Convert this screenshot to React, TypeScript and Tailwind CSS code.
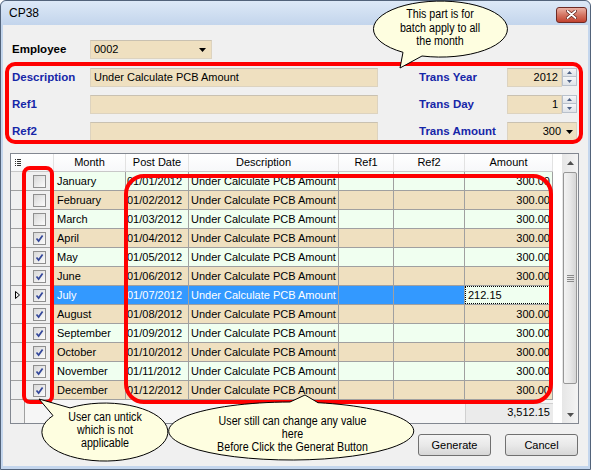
import React from 'react';

const MONTHS = [
  'January',
  'February',
  'March',
  'April',
  'May',
  'June',
  'July',
  'August',
  'September',
  'October',
  'November',
  'December',
];

const rows = MONTHS.map((month, i) => ({
  month,
  postDate: `01/${String(i + 1).padStart(2, '0')}/2012`,
  checked: i >= 3,
  amount: i === 6 ? '212.15' : '300.00',
}));

const SELECTED = 6;

const DropArrow = () => (
  <svg width="7" height="4" viewBox="0 0 7 4">
    <path d="M0 0 H7 L3.5 4 Z" fill="#000" />
  </svg>
);

const Spinner = () => (
  <div className="flex w-[15px] flex-col">
    <div className="flex h-[9px] items-center justify-center border border-[#b9c1cc] bg-gradient-to-b from-[#f6f7f9] to-[#dfe3e8]">
      <svg width="5" height="3" viewBox="0 0 5 3">
        <path d="M0 3 H5 L2.5 0 Z" fill="#4d6185" />
      </svg>
    </div>
    <div className="flex h-[9px] items-center justify-center border border-t-0 border-[#b9c1cc] bg-gradient-to-b from-[#f6f7f9] to-[#dfe3e8]">
      <svg width="5" height="3" viewBox="0 0 5 3">
        <path d="M0 0 H5 L2.5 3 Z" fill="#4d6185" />
      </svg>
    </div>
  </div>
);

const Checkbox = ({ checked }: { checked: boolean }) => (
  <div className="flex h-[13px] w-[13px] items-center justify-center border border-[#8f8f8f] bg-gradient-to-br from-[#d8d8d8] to-[#fbfbfb]">
    {checked && (
      <svg width="9" height="9" viewBox="0 0 9 9">
        <path d="M1.5 4.5 L3.6 7 L7.6 1.4" fill="none" stroke="#33479a" strokeWidth="1.7" />
      </svg>
    )}
  </div>
);

const Label = ({ children, blue }: { children: React.ReactNode; blue?: boolean }) => (
  <div className={`text-[11.5px] font-bold leading-[19px] ${blue ? 'text-[#1626a8]' : 'text-black'}`}>{children}</div>
);

const inputCls = 'h-[19px] border border-[#ddd3bf] border-t-[#c9c1b1] bg-[#efe0c0] px-[3px] leading-[17px]';
const line = 'border-r border-b border-[#a0a0a0]';

const GridRow = ({ row, index }: { row: (typeof rows)[number]; index: number }) => {
  const sel = index === SELECTED;
  const base = index % 2 === 0 ? 'bg-[#f0fff0]' : 'bg-[#efe0c0]';
  const cell = sel ? 'bg-[#3399ff] text-white' : `${base} text-black`;
  return (
    <div className="flex h-[19px] leading-[18px]">
      <div className={`flex w-[14px] items-center justify-center bg-[#f0f0f0] ${line}`}>
        {sel && (
          <svg width="5" height="8" viewBox="0 0 5 8">
            <path d="M0.5 0.5 L4.5 4 L0.5 7.5 Z" fill="none" stroke="#000" strokeWidth="1" />
          </svg>
        )}
      </div>
      <div className={`flex w-[29px] items-center justify-center bg-[#f0f0f0] ${line}`}>
        <Checkbox checked={row.checked} />
      </div>
      <div className={`w-[72px] pl-[3px] ${line} ${cell}`}>{row.month}</div>
      <div className={`w-[63px] pl-[1px] ${line} ${cell}`}>{row.postDate}</div>
      <div className={`w-[150px] pl-[2px] whitespace-nowrap overflow-hidden ${line} ${cell}`}>Under Calculate PCB Amount</div>
      <div className={`w-[55px] ${line} ${cell}`} />
      <div className={`w-[71px] ${line} ${cell}`} />
      {sel ? (
        <div className="w-[88px] border-b border-r border-[#a0a0a0] bg-[#f0fff0]">
          <div className="h-[18px] border border-dotted border-black pl-[2px] leading-[16px]">{row.amount}</div>
        </div>
      ) : (
        <div className={`w-[88px] pr-[2px] text-right ${line} ${base}`}>{row.amount}</div>
      )}
    </div>
  );
};

const HeaderCell = ({ w, children }: { w: string; children?: React.ReactNode }) => (
  <div className={`${w} border-r border-[#e2e2e2] text-center leading-[17px]`}>{children}</div>
);

const Button = ({ children }: { children: React.ReactNode }) => (
  <button className="h-[22px] w-[73px] rounded-[3px] border border-[#707070] bg-gradient-to-b from-[#f4f4f4] via-[#e9e9e9] to-[#d7d7d7] text-[11px] leading-[20px] text-black">
    {children}
  </button>
);

export default function App() {
  return (
    <div className="relative h-[470px] w-[591px] overflow-hidden bg-white font-['Liberation_Sans',Arial,sans-serif] text-[11px] text-black">
      <div className="flex h-full flex-col rounded-t-[6px] border border-[#52637a] bg-[#c4d6ed]">
        {/* title bar */}
        <div className="flex h-[24px] items-center justify-between rounded-t-[6px] bg-gradient-to-b from-[#dde9f7] to-[#c3d5ec] pl-[8px] pr-[3px]">
          <span className="text-[12px] text-black">CP38</span>
          <div className="mt-[3px] flex h-[16px] w-[31px] items-center justify-center rounded-[3px] border border-[#6e2a24] bg-gradient-to-b from-[#eab1a4] via-[#d47563] to-[#c2412f]">
            <svg width="11" height="9" viewBox="0 0 11 9">
              <path d="M1.5 1 L9.5 8 M9.5 1 L1.5 8" stroke="#5a1a14" strokeWidth="3.2" strokeLinecap="round" />
              <path d="M1.5 1 L9.5 8 M9.5 1 L1.5 8" stroke="#fff" strokeWidth="1.8" strokeLinecap="round" />
            </svg>
          </div>
        </div>

        {/* body */}
        <div className="mx-[2px] mb-[3px] flex flex-1 flex-col bg-[#f0f0f0]">
          <div className="px-[9px] pt-[15px]">
            <div className="flex h-[19px] items-center">
              <div className="w-[78px]">
                <Label>Employee</Label>
              </div>
              <div className={`flex w-[122px] items-center justify-between ${inputCls}`}>
                <span>0002</span>
                <span className="mr-[2px]">
                  <DropArrow />
                </span>
              </div>
            </div>

            <div className="mt-[9px] flex">
              <div className="flex w-[366px] flex-col gap-[8px]">
                <div className="flex">
                  <div className="w-[78px]">
                    <Label blue>Description</Label>
                  </div>
                  <div className={`w-[288px] ${inputCls}`}>Under Calculate PCB Amount</div>
                </div>
                <div className="flex">
                  <div className="w-[78px]">
                    <Label blue>Ref1</Label>
                  </div>
                  <div className={`w-[288px] ${inputCls}`} />
                </div>
                <div className="flex">
                  <div className="w-[78px]">
                    <Label blue>Ref2</Label>
                  </div>
                  <div className={`w-[288px] ${inputCls}`} />
                </div>
              </div>

              <div className="ml-[41px] flex flex-col gap-[8px]">
                <div className="flex">
                  <div className="w-[88px]">
                    <Label blue>Trans Year</Label>
                  </div>
                  <div className={`w-[55px] text-right ${inputCls}`}>2012</div>
                  <Spinner />
                </div>
                <div className="flex">
                  <div className="w-[88px]">
                    <Label blue>Trans Day</Label>
                  </div>
                  <div className={`w-[55px] text-right ${inputCls}`}>1</div>
                  <Spinner />
                </div>
                <div className="flex">
                  <div className="w-[88px]">
                    <Label blue>Trans Amount</Label>
                  </div>
                  <div className={`flex w-[70px] items-center justify-end gap-[5px] ${inputCls}`}>
                    <span>300</span>
                    <DropArrow />
                  </div>
                </div>
              </div>
            </div>
          </div>

          {/* grid */}
          <div className="ml-[7px] mt-[12px] flex h-[271px] w-[569px] border border-[#828790] bg-white">
            <div className="flex w-[542px] flex-col">
              <div className="flex h-[18px] border-b border-[#c8c8c8] bg-gradient-to-b from-white to-[#f7f8fa]">
                <div className="flex w-[14px] items-center justify-center">
                  <svg width="6" height="8" viewBox="0 0 6 8">
                    <path d="M0 0.5 H1 M2 0.5 H6 M0 2.5 H1 M2 2.5 H6 M0 4.5 H1 M2 4.5 H6 M0 6.5 H1 M2 6.5 H6" stroke="#333" strokeWidth="1" />
                  </svg>
                </div>
                <HeaderCell w="w-[29px]" />
                <HeaderCell w="w-[72px]">Month</HeaderCell>
                <HeaderCell w="w-[63px]">Post Date</HeaderCell>
                <HeaderCell w="w-[150px]">Description</HeaderCell>
                <HeaderCell w="w-[55px]">Ref1</HeaderCell>
                <HeaderCell w="w-[71px]">Ref2</HeaderCell>
                <HeaderCell w="w-[88px]">Amount</HeaderCell>
              </div>

              {rows.map((row, i) => (
                <GridRow key={row.month} row={row} index={i} />
              ))}

              <div className="flex flex-1">
                <div className="w-[14px] border-r border-[#a0a0a0] bg-[#f0f0f0]" />
                <div className="w-[440px] bg-[#f6f6f6]" />
                <div className="flex w-[88px] flex-col bg-[#f6f6f6] pt-[3px]">
                  <div className="flex-1 border-l border-t border-[#d0d0d0] bg-[#ebebeb] pr-[3px] text-right leading-[17px]">
                    3,512.15
                  </div>
                </div>
              </div>
            </div>

            <div className="w-[9px] bg-white" />

            {/* scrollbar */}
            <div className="flex w-[16px] flex-col bg-gradient-to-r from-[#e6e6e6] to-[#f4f4f4]">
              <div className="flex h-[17px] items-center justify-center">
                <svg width="7" height="4" viewBox="0 0 7 4">
                  <path d="M0 4 H7 L3.5 0 Z" fill="#505050" />
                </svg>
              </div>
              <div className="mx-[1px] mt-[1px] flex h-[212px] items-center justify-center rounded-[2px] border border-[#979797] bg-gradient-to-r from-[#f3f3f3] via-[#e8e8e8] to-[#d6d6d6]">
                <svg width="7" height="7" viewBox="0 0 7 7">
                  <path d="M0 0.5 H7 M0 2.5 H7 M0 4.5 H7 M0 6.5 H7" stroke="#8a8a8a" strokeWidth="1" />
                </svg>
              </div>
              <div className="flex-1" />
              <div className="flex h-[17px] items-center justify-center">
                <svg width="7" height="4" viewBox="0 0 7 4">
                  <path d="M0 0 H7 L3.5 4 Z" fill="#505050" />
                </svg>
              </div>
            </div>
          </div>

          {/* buttons */}
          <div className="mt-[10px] flex justify-end gap-[14px] pr-[10px]">
            <Button>Generate</Button>
            <Button>Cancel</Button>
          </div>
        </div>
      </div>

      {/* red highlight rings */}
      <div className="pointer-events-none absolute left-[5px] top-[62px] h-[82px] w-[578px] rounded-[10px] border-[4px] border-[#ff0000]" />
      <div className="pointer-events-none absolute left-[22px] top-[166px] h-[238px] w-[32px] rounded-[8px] border-[4px] border-[#ff0000]" />
      <div className="pointer-events-none absolute left-[124px] top-[174px] h-[230px] w-[429px] rounded-[20px] border-[4px] border-[#ff0000]" />

      {/* callouts */}
      <svg className="pointer-events-none absolute left-0 top-0" width="591" height="470" viewBox="0 0 591 470">
        <path d="M422 56 A67 28 0 1 0 403 52.3 L400 68 Z" fill="#fefee0" stroke="#000" strokeWidth="1" />
        <path d="M70 407.9 A63 29 0 1 1 53 415.6 L39 399 Z" fill="#fefee0" stroke="#000" strokeWidth="1" />
        <path d="M318 402.7 A122.5 29 0 1 1 290 402 L305 395 Z" fill="#fefee0" stroke="#000" strokeWidth="1" />
      </svg>
      <div className="pointer-events-none absolute left-[373px] top-[8px] w-[134px] scale-x-[0.89] text-center text-[12px] leading-[13.5px]">
        This part is for
        <br />
        batch apply to all
        <br />
        the month
      </div>
      <div className="pointer-events-none absolute left-[42px] top-[411px] w-[126px] scale-x-[0.89] text-center text-[12px] leading-[13px]">
        User can untick
        <br />
        which is not
        <br />
        applicable
      </div>
      <div className="pointer-events-none absolute left-[170px] top-[415px] w-[245px] scale-x-[0.89] text-center text-[12px] leading-[13px]">
        User still can change any value
        <br />
        here
        <br />
        Before Click the Generat Button
      </div>
    </div>
  );
}
